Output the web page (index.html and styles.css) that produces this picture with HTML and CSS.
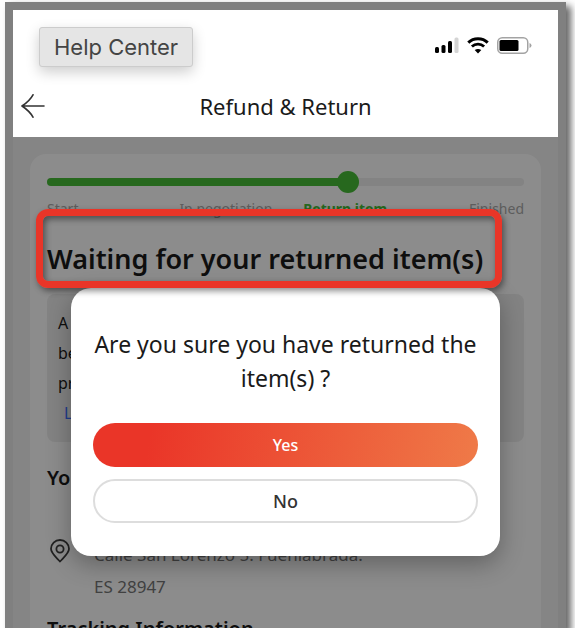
FILE: index.html
```html
<!DOCTYPE html>
<html lang="en">
<head>
    <meta charset="UTF-8">
    <meta name="viewport" content="width=device-width, initial-scale=1.0">
    <title>Refund &amp; Return</title>
    <link rel="stylesheet" href="styles.css">
</head>
<body>
    <div class="page">
        <div class="phone">
            <header class="header">
                <div class="status-bar">
                    <span class="tooltip">Help Center</span>
                    <div class="status-icons">
                        <svg width="24" height="17" viewBox="0 0 24 17">
                            <rect x="0" y="10" width="4" height="6" rx="1.5"/>
                            <rect x="6.5" y="8" width="4" height="8" rx="1.5"/>
                            <rect x="13" y="4" width="4" height="12" rx="1.5"/>
                            <rect x="19.5" y="0.5" width="4" height="15.5" rx="1.5" fill="#d4d4d4"/>
                        </svg>
                        <svg width="22" height="17" viewBox="0 0 22 17">
                            <path d="M1.3 5.6C6.6 .4 15.4 .4 20.7 5.6" fill="none" stroke="#000" stroke-width="3"/>
                            <path d="M4.9 9.5C8.3 6.3 13.7 6.3 17.1 9.5" fill="none" stroke="#000" stroke-width="2.8"/>
                            <path d="M7.7 13.1Q11 10.7 14.3 13.1L11 16.6Z"/>
                        </svg>
                        <svg width="35" height="17" viewBox="0 0 35 17">
                            <rect x="0.75" y="0.75" width="30" height="15.5" rx="4.5" fill="#fff" stroke="#a3a3a3" stroke-width="1.5"/>
                            <rect x="2.5" y="3" width="19" height="11" rx="1.5"/>
                            <path d="M32.5 6v5q2-.6 2-2.5t-2-2.5z" fill="#a3a3a3"/>
                        </svg>
                    </div>
                </div>
                <div class="nav">
                    <button class="back" aria-label="Back">
                        <svg width="24" height="24" viewBox="0 0 24 24" fill="none" stroke="#333" stroke-width="1.6" stroke-linecap="round" stroke-linejoin="round">
                            <path d="M23 12H1M12 .8C10 4.5 5.5 9 1 12C5.5 15 10 19.5 12 23.2"/>
                        </svg>
                    </button>
                    <h1>Refund &amp; Return</h1>
                </div>
            </header>

            <main class="content">
                <section class="card">
                    <div class="progress">
                        <div class="progress-done" style="width: 63%"></div>
                    </div>
                    <div class="steps">
                        <span>Start</span>
                        <span>In negotiation</span>
                        <span class="active">Return item</span>
                        <span>Finished</span>
                    </div>

                    <div class="title">
                        <h2>Waiting for your returned item(s)</h2>
                        <div class="highlight"></div>
                    </div>

                    <div class="notice">
                        <p>A refund will be issued after your item(s)</p>
                        <p>been received and checked. Please</p>
                        <p>provide the tracking number.</p>
                        <a href="#">Learn more</a>
                    </div>

                    <h3>Your return address</h3>
                    <div class="address">
                        <svg width="20" height="24" viewBox="0 0 20 24" fill="none" stroke="#3c3c3c" stroke-width="1.8" stroke-linejoin="round">
                            <path d="M10 22.5C7 19 1 14.5 1 9.8A9 8.8 0 0 1 19 9.8C19 14.5 13 19 10 22.5Z"/>
                            <circle cx="10" cy="10" r="3.6"/>
                        </svg>
                        <p>Calle San Lorenzo 5. Fuenlabrada.<br>ES 28947</p>
                    </div>

                    <h3>Tracking Information</h3>
                </section>

                <div class="overlay">
                    <div class="modal" role="dialog" aria-labelledby="question">
                        <p id="question">Are you sure you have returned the item(s) ?</p>
                        <button class="btn btn-yes">Yes</button>
                        <button class="btn btn-no">No</button>
                    </div>
                </div>
            </main>
        </div>
    </div>
</body>
</html>
```

FILE: styles.css
```css
* {
    box-sizing: border-box;
}
body {
    margin: 0;
    background-color: #fff;
    font-family: "Noto Sans", "Open Sans", sans-serif;
    color: #1a1a1a;
}
h1, h2, h3, p {
    margin: 0;
}
.page {
    height: 100vh;
    margin-right: 9px;
    padding: 2px 9px 0 5px;
    overflow: hidden;
}
.phone {
    display: flex;
    flex-direction: column;
    height: 100vh;
    border: 8px solid #808080;
    border-bottom: none;
    box-shadow: 5px 4px 7px rgba(0, 0, 0, 0.6);
}

/* Header */
.header {
    flex: none;
    background-color: #fff;
    padding: 17px 26px 0;
}
.status-bar {
    display: flex;
    justify-content: space-between;
    align-items: center;
}
.tooltip {
    padding: 0 14px;
    border: 1px solid #ccc;
    border-radius: 3px;
    background-color: #e5e5e5;
    box-shadow: 0 5px 14px rgba(0, 0, 0, 0.2);
    color: #444;
    font-family: Inter, sans-serif;
    font-size: 22px;
    line-height: 38px;
}
.status-icons {
    display: flex;
    gap: 8px;
    margin-bottom: 4px;
}
.nav {
    display: flex;
    align-items: center;
    justify-content: center;
    position: relative;
    height: 70px;
    padding-top: 8px;
}
.back {
    position: absolute;
    left: -18px;
    display: flex;
    padding: 0;
    border: none;
    background: none;
    cursor: pointer;
}
.nav h1 {
    font-size: 22px;
    font-weight: 400;
}

/* Content */
.content {
    flex: 1;
    position: relative;
    min-height: 0;
    padding: 17px;
    overflow: hidden;
    background-color: #f2f2f2;
}
.card {
    padding: 24px 17px;
    border-radius: 16px;
    background-color: #fff;
}
.progress {
    height: 8px;
    border-radius: 4px;
    background-color: #eee;
}
.progress-done {
    position: relative;
    height: 8px;
    border-radius: 4px;
    background-color: #48bd38;
}
.progress-done::after {
    content: "";
    position: absolute;
    top: -7px;
    right: -11px;
    width: 22px;
    height: 22px;
    border-radius: 50%;
    background-color: #48bd38;
}
.steps {
    display: grid;
    grid-template-columns: repeat(4, 1fr);
    margin-top: 12px;
    color: #aaa;
    font-size: 14px;
    line-height: 22px;
    text-align: center;
}
.steps span:first-child {
    text-align: left;
}
.steps span:last-child {
    text-align: right;
}
.steps .active {
    color: #48bd38;
    font-weight: 700;
}
.title {
    position: relative;
    padding: 20px 0 16px;
}
.title h2 {
    font-size: 27px;
    font-weight: 600;
    line-height: 38px;
    white-space: nowrap;
}
.highlight {
    position: absolute;
    z-index: 3;
    top: -11px;
    left: -11px;
    right: 22px;
    height: 79px;
    border: 7px solid #e93528;
    border-radius: 12px;
    box-shadow: 2px 3px 6px rgba(0, 0, 0, 0.45), inset 2px 3px 6px rgba(0, 0, 0, 0.45);
}
.notice {
    margin-bottom: 20px;
    padding: 14px 11px;
    border-radius: 8px;
    background-color: #efefef;
    font-size: 16px;
    line-height: 30px;
}
.notice a {
    padding-left: 6px;
    color: #3c6fff;
    text-decoration: none;
}
.card h3 {
    margin-top: 10px;
    font-size: 20px;
    font-weight: 600;
    line-height: 32px;
}
.address {
    display: flex;
    gap: 24px;
    padding: 45px 3px 0;
    color: #777;
    font-size: 17px;
    line-height: 32px;
}
.address svg {
    flex: none;
}

/* Dialog */
.overlay {
    position: absolute;
    z-index: 2;
    inset: 0;
    padding: 151px 58px 0;
    background-color: rgba(0, 0, 0, 0.45);
}
.modal {
    display: flex;
    flex-direction: column;
    gap: 12px;
    padding: 39px 22px 33px;
    border-radius: 20px;
    background-color: #fff;
    box-shadow: 0 8px 24px rgba(0, 0, 0, 0.3);
    text-align: center;
}
.modal p {
    margin-bottom: 16px;
    font-size: 23px;
    line-height: 34px;
}
.btn {
    height: 44px;
    border: none;
    border-radius: 22px;
    font-family: inherit;
    font-size: 18px;
    font-weight: 500;
    cursor: pointer;
}
.btn-yes {
    background-image: linear-gradient(100deg, #ea3528 15%, #ef7a48);
    color: #fff;
    font-size: 16px;
}
.btn-no {
    border: 2px solid #ddd;
    background-color: #fff;
    color: #333;
}
```
